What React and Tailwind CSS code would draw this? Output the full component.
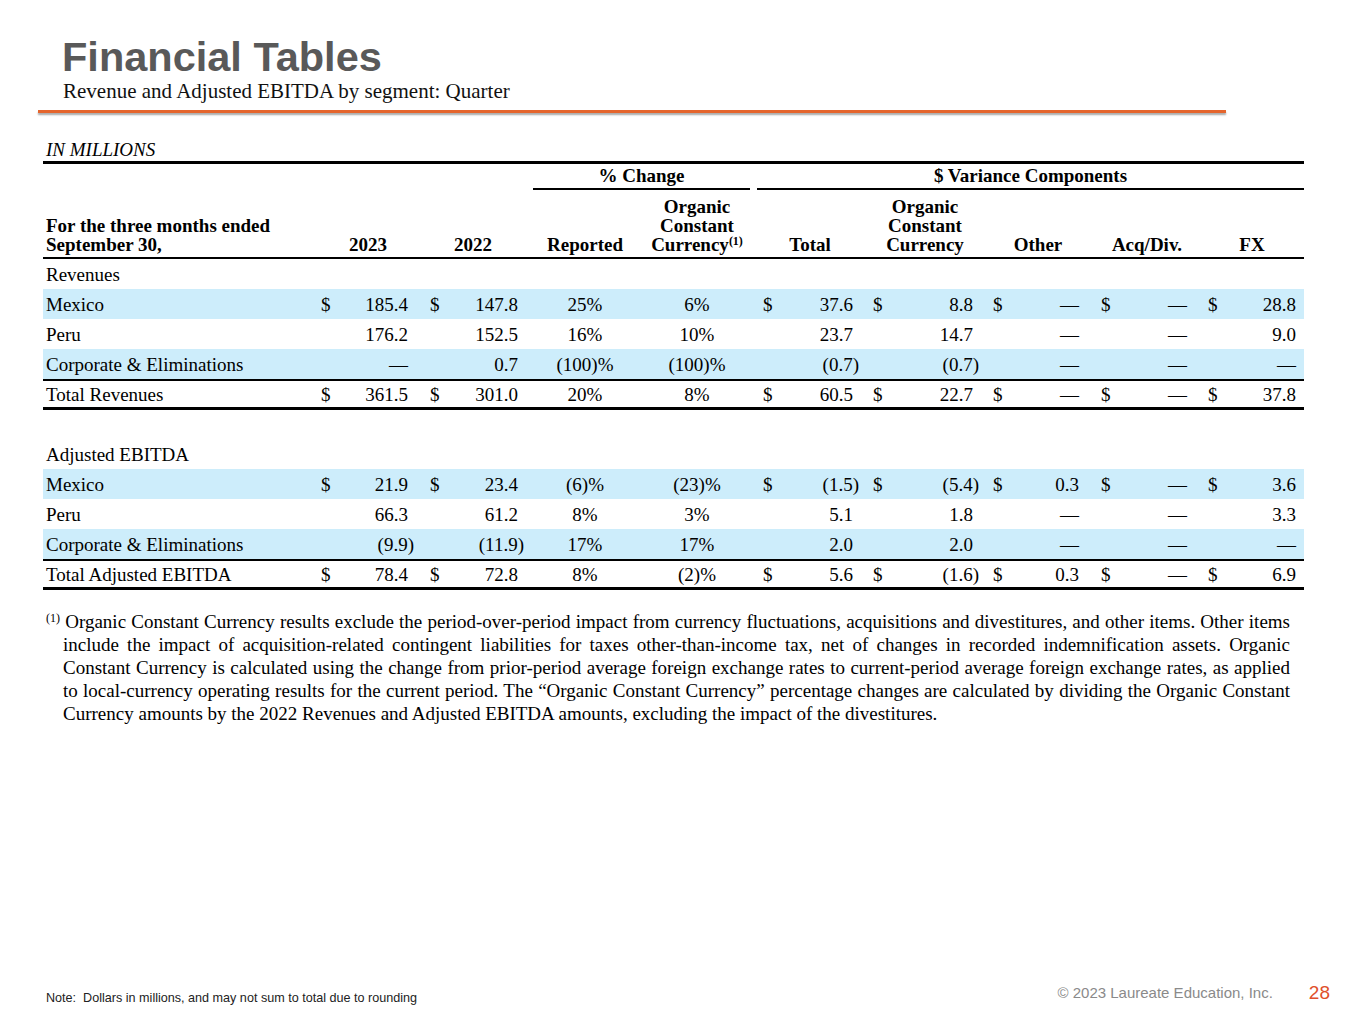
import React from 'react';

const GRID =
  'grid grid-cols-[275px_22px_78px_28px_82px_114px_110px_22px_94px_18px_102px_20px_86px_20px_86px_20px_84px]';

// per column: kind d = dollar sign, v = value (right aligned), p = percent (centered)
const cols = [
  { kind: 'd', pad: 'pl-[3px]' },
  { kind: 'v', pad: 'pr-[10px]' },
  { kind: 'd', pad: 'pl-[12px]' },
  { kind: 'v', pad: 'pr-[10px]' },
  { kind: 'p', pad: '' },
  { kind: 'p', pad: '' },
  { kind: 'd', pad: 'pl-[11px]' },
  { kind: 'v', pad: 'pr-[15px]' },
  { kind: 'd', pad: 'pl-[5px]' },
  { kind: 'v', pad: 'pr-[15px]' },
  { kind: 'd', pad: 'pl-[5px]' },
  { kind: 'v', pad: 'pr-[15px]' },
  { kind: 'd', pad: 'pl-[7px]' },
  { kind: 'v', pad: 'pr-[13px]' },
  { kind: 'd', pad: 'pl-[8px]' },
  { kind: 'v', pad: 'pr-[8px]' },
];

const D = '—';

const revenues = [
  { label: 'Mexico', blue: true, cells: ['$', '185.4', '$', '147.8', '25%', '6%', '$', '37.6', '$', '8.8', '$', D, '$', D, '$', '28.8'] },
  { label: 'Peru', cells: ['', '176.2', '', '152.5', '16%', '10%', '', '23.7', '', '14.7', '', D, '', D, '', '9.0'] },
  { label: 'Corporate & Eliminations', blue: true, cells: ['', D, '', '0.7', '(100)%', '(100)%', '', '(0.7)', '', '(0.7)', '', D, '', D, '', D] },
];
const revTotal = { label: 'Total Revenues', cells: ['$', '361.5', '$', '301.0', '20%', '8%', '$', '60.5', '$', '22.7', '$', D, '$', D, '$', '37.8'] };

const ebitda = [
  { label: 'Mexico', blue: true, cells: ['$', '21.9', '$', '23.4', '(6)%', '(23)%', '$', '(1.5)', '$', '(5.4)', '$', '0.3', '$', D, '$', '3.6'] },
  { label: 'Peru', cells: ['', '66.3', '', '61.2', '8%', '3%', '', '5.1', '', '1.8', '', D, '', D, '', '3.3'] },
  { label: 'Corporate & Eliminations', blue: true, cells: ['', '(9.9)', '', '(11.9)', '17%', '17%', '', '2.0', '', '2.0', '', D, '', D, '', D] },
];
const ebitdaTotal = { label: 'Total Adjusted EBITDA', cells: ['$', '78.4', '$', '72.8', '8%', '(2)%', '$', '5.6', '$', '(1.6)', '$', '0.3', '$', D, '$', '6.9'] };

function Value({ v }) {
  // negative numbers: closing paren hangs past the column's right edge
  if (v.startsWith('(') && v.endsWith(')')) {
    return (
      <span>
        {v.slice(0, -1)}
        <span className="-mr-[6px]">)</span>
      </span>
    );
  }
  return <span>{v}</span>;
}

function Cells({ cells }) {
  return cells.map((c, i) => {
    const col = cols[i];
    const align = col.kind === 'd' ? 'text-left' : col.kind === 'v' ? 'text-right' : 'text-center';
    return (
      <div key={i} className={`${align} ${col.pad} whitespace-nowrap`}>
        {col.kind === 'v' ? <Value v={c} /> : c}
      </div>
    );
  });
}

function Row({ row }) {
  return (
    <div className={`${GRID} h-[30px] items-center ${row.blue ? 'bg-[#cdedfb]' : ''}`}>
      <div className="pl-[3px] whitespace-nowrap">{row.label}</div>
      <Cells cells={row.cells} />
    </div>
  );
}

function TotalRow({ row }) {
  return (
    <div className={`${GRID} h-[31px] items-center border-t-2 border-b-[3px] border-black`}>
      <div className="pl-[3px] whitespace-nowrap">{row.label}</div>
      <Cells cells={row.cells} />
    </div>
  );
}

function SectionLabel({ children }) {
  return <div className="h-[30px] flex items-center pl-[3px]">{children}</div>;
}

export default function App() {
  return (
    <div className="w-[1365px] h-[1024px] bg-white flex flex-col font-['Liberation_Serif',serif] text-black">
      {/* Header */}
      <div className="pl-[62px] pt-[36px]">
        <h1 className="font-['Liberation_Sans',Arial,sans-serif] font-bold text-[41.5px] leading-[41px] text-[#595959]">
          Financial Tables
        </h1>
        <p className="mt-[2px] pl-[1px] text-[21px] leading-[24px] text-[#111]">
          Revenue and Adjusted EBITDA by segment: Quarter
        </p>
      </div>
      <div className="mt-[7px] ml-[38px] w-[1188px] h-[3px] bg-[#e5652d] shadow-[0_2px_2px_rgba(0,0,0,0.35)]" />

      {/* Table */}
      <div className="ml-[43px] w-[1261px] text-[19px] leading-[19px]">
        <div className="mt-[27px] pl-[3px] italic">IN MILLIONS</div>

        <div className="mt-[2px] border-t-[3px] border-black">
          {/* header row 1 */}
          <div className={`${GRID} pt-[2px] font-bold`}>
            <div className="col-start-6 col-span-2 ml-[5px] mr-[2px] pb-[3px] border-b-2 border-black text-center">
              % Change
            </div>
            <div className="col-start-8 col-span-10 ml-[5px] pb-[3px] border-b-2 border-black text-center">
              $ Variance Components
            </div>
          </div>

          {/* header row 2 */}
          <div className={`${GRID} items-end pt-[7px] pb-[3px] border-b-2 border-black font-bold`}>
            <div className="pl-[3px] whitespace-nowrap">
              For the three months ended
              <br />
              September 30,
            </div>
            <div className="col-span-2 text-center">2023</div>
            <div className="col-span-2 text-center">2022</div>
            <div className="text-center">Reported</div>
            <div className="text-center">
              Organic
              <br />
              Constant
              <br />
              Currency<sup className="text-[12px]">(1)</sup>
            </div>
            <div className="col-span-2 text-center">Total</div>
            <div className="col-span-2 text-center pr-[6px]">
              Organic
              <br />
              Constant
              <br />
              Currency
            </div>
            <div className="col-span-2 text-center pr-[6px]">Other</div>
            <div className="col-span-2 text-center">Acq/Div.</div>
            <div className="col-span-2 text-center">FX</div>
          </div>

          <SectionLabel>Revenues</SectionLabel>
          {revenues.map((r) => (
            <Row key={r.label} row={r} />
          ))}
          <TotalRow row={revTotal} />

          <div className="h-[29px]" />

          <SectionLabel>Adjusted EBITDA</SectionLabel>
          {ebitda.map((r) => (
            <Row key={r.label} row={r} />
          ))}
          <TotalRow row={ebitdaTotal} />
        </div>
      </div>

      {/* Footnote */}
      <p className="mt-[20px] ml-[46px] w-[1244px] pl-[17px] -indent-[17px] text-[19px] leading-[23px] text-justify">
        <sup className="text-[12px]">(1)</sup> Organic Constant Currency results exclude the period-over-period impact from
        currency fluctuations, acquisitions and divestitures, and other items. Other items include the impact of
        acquisition-related contingent liabilities for taxes other-than-income tax, net of changes in recorded
        indemnification assets. Organic Constant Currency is calculated using the change from prior-period average
        foreign exchange rates to current-period average foreign exchange rates, as applied to local-currency operating
        results for the current period. The “Organic Constant Currency” percentage changes are calculated by dividing
        the Organic Constant Currency amounts by the 2022 Revenues and Adjusted EBITDA amounts, excluding the impact of
        the divestitures.
      </p>

      {/* Footer */}
      <div className="mt-auto mb-[19px] h-[24px] flex items-center font-['Liberation_Sans',Arial,sans-serif]">
        <span className="ml-[46px] mt-[10px] text-[12.6px] leading-[16px] text-[#222] whitespace-pre">
          Note:  Dollars in millions, and may not sum to total due to rounding
        </span>
        <span className="ml-auto text-[15px] leading-[18px] text-[#8a8a8a]">© 2023 Laureate Education, Inc.</span>
        <span className="ml-[36px] mr-[35px] text-[19px] leading-[22px] text-[#e0502b]">28</span>
      </div>
    </div>
  );
}
